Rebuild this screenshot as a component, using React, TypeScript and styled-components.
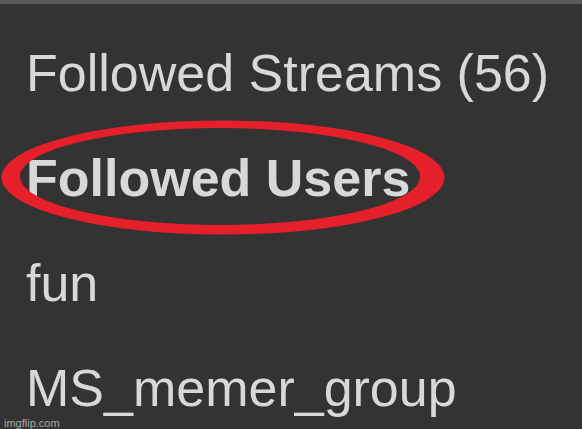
import * as React from 'react'
import styled, { createGlobalStyle } from 'styled-components'

const GlobalStyle = createGlobalStyle`
  html, body {
    margin: 0;
    padding: 0;
    background: #333333;
  }
`

const items = [
  { label: 'Followed Streams (56)' },
  { label: 'Followed Users', active: true, circled: true },
  { label: 'fun' },
  { label: 'MS_memer_group' },
]

export default function App() {
  return (
    <>
      <GlobalStyle />
      <Panel>
        <List>
          {items.map((item) => (
            <Item key={item.label} $active={item.active}>
              {item.label}
              {item.circled && <Circle />}
            </Item>
          ))}
        </List>
        <Watermark>imgflip.com</Watermark>
      </Panel>
    </>
  )
}

// hand-drawn red ring: outer and inner ellipse, thicker on the right
const Circle: React.FC = () => (
  <Mark viewBox="0 0 446 116" width="446" height="116">
    <path
      fill="#e5202a"
      fillRule="evenodd"
      d="M0.5 57.5 A221.5 57 0 1 0 443.5 57.5 A221.5 57 0 1 0 0.5 57.5 Z
         M19 56.5 A200 48.5 0 1 0 419 56.5 A200 48.5 0 1 0 19 56.5 Z"
    />
  </Mark>
)

const Panel = styled.div`
  position: relative;
  height: 100vh;
  box-sizing: border-box;
  border-top: 4px solid #5b5b5b;
  background: #333333;
  overflow: hidden;
`

const List = styled.ul`
  list-style: none;
  margin: 0;
  padding: 16px 0 0 0;
`

const Item = styled.li<{ $active?: boolean }>`
  position: relative;
  padding: 26.5px 0 26.5px 26px;
  font-family: 'Liberation Sans', Arial, sans-serif;
  font-size: 52px;
  line-height: 52px;
  font-weight: ${(p) => (p.$active ? 700 : 400)};
  color: #d8d8d8;
  white-space: nowrap;
`

const Mark = styled.svg`
  position: absolute;
  left: 1px;
  top: -5px;
  pointer-events: none;
`

const Watermark = styled.span`
  position: absolute;
  left: 4px;
  bottom: 0;
  font-family: 'Liberation Sans', Arial, sans-serif;
  font-size: 11px;
  line-height: 11px;
  color: #a8a8a8;
`
